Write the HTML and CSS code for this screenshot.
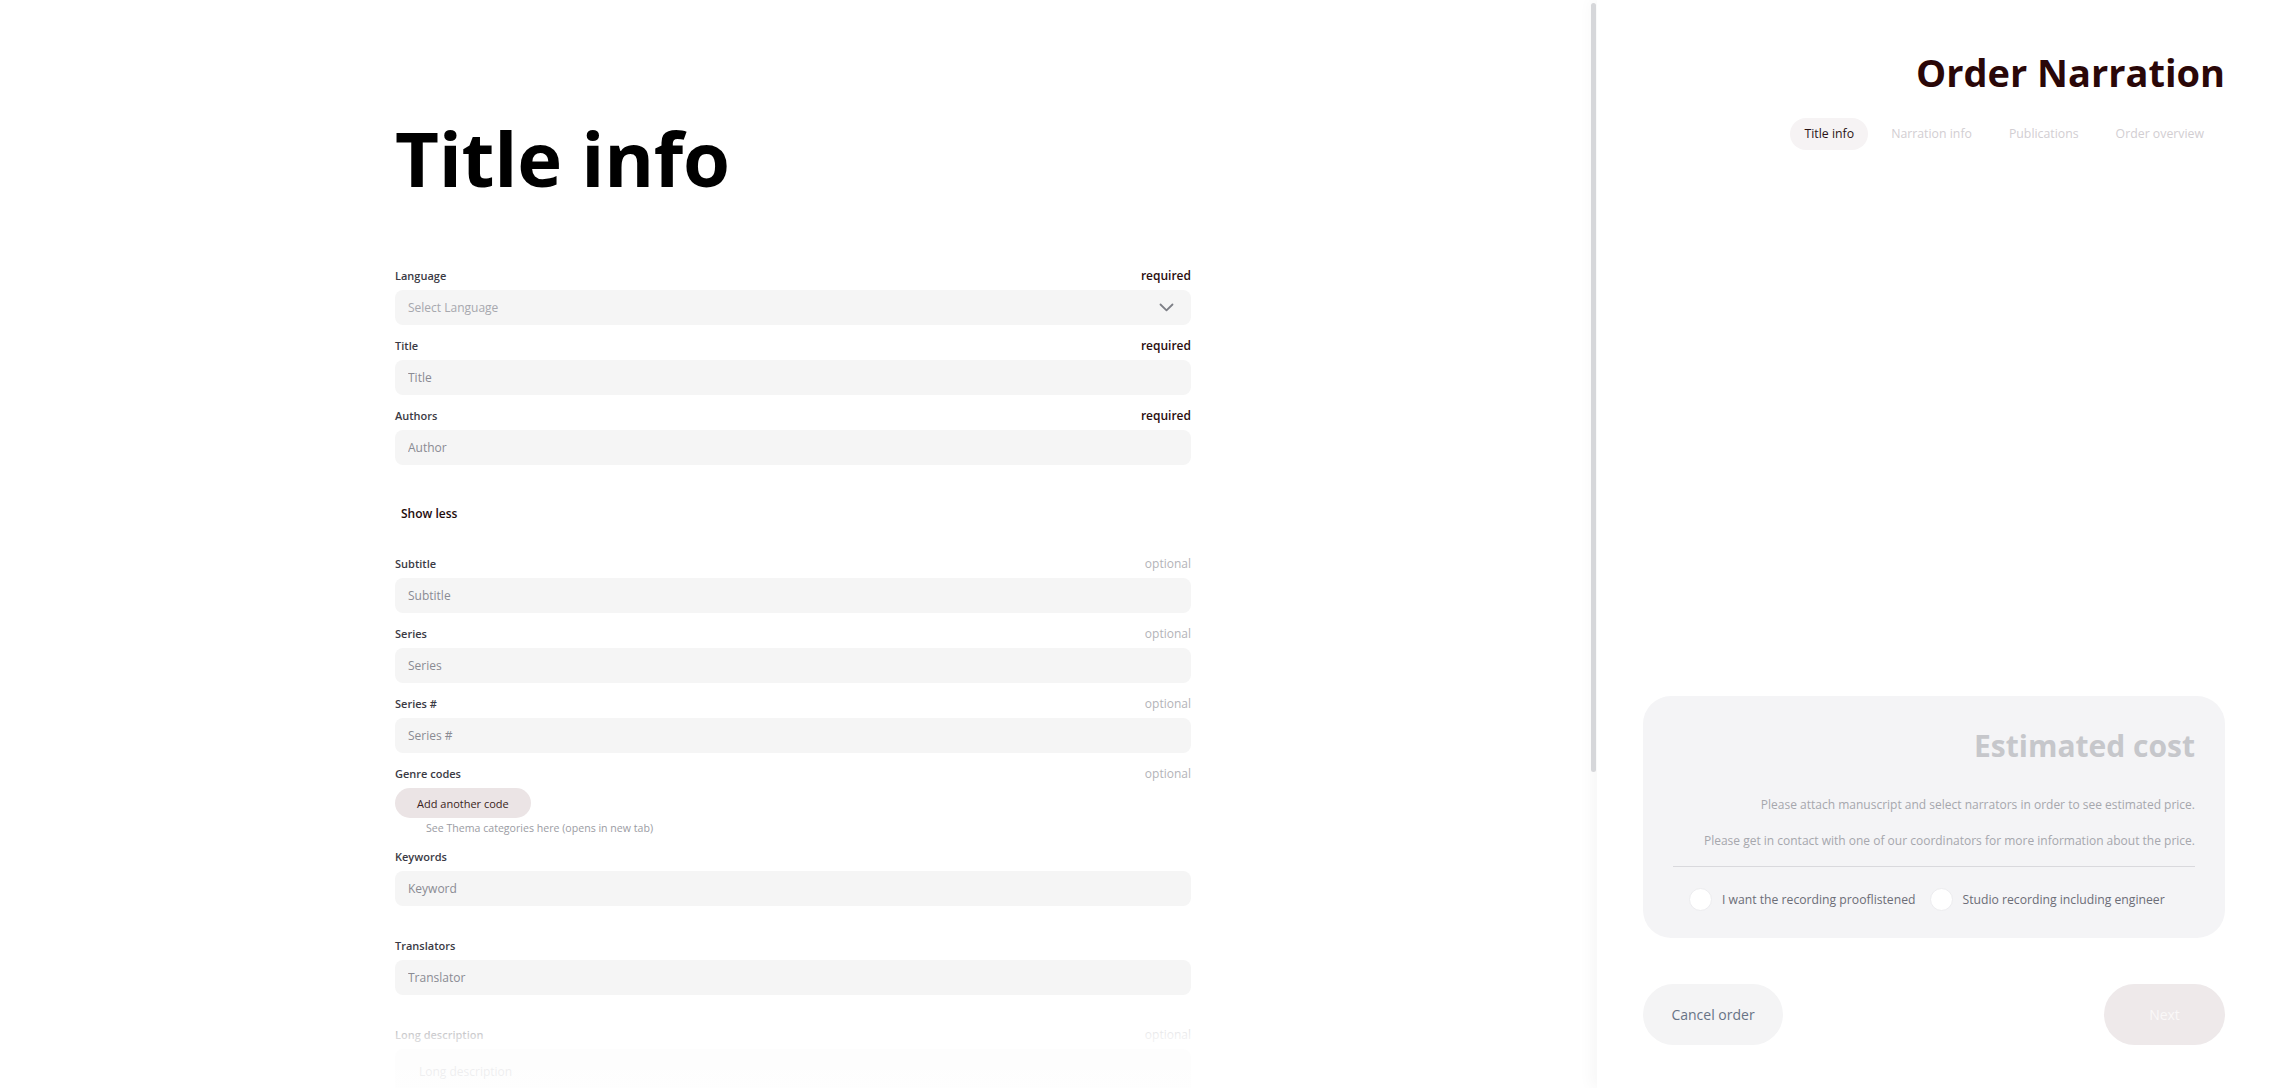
FILE: index.html
```html
<!DOCTYPE html>
<html lang="en">
<head>
<meta charset="utf-8">
<title>Order Narration</title>
<link rel="stylesheet" href="styles.css">
</head>
<body>
<div class="app">
  <main class="left">
    <div class="form-wrap">
      <h1 class="page-title">Title info</h1>

      <div class="field">
        <div class="field-head"><span class="label">Language</span><span class="req">required</span></div>
        <div class="select">
          <span class="select-ph">Select Language</span>
          <svg class="chev" width="15" height="9" viewBox="0 0 15 9"><path d="M1.5 1.5 L7.5 7.3 L13.5 1.5" fill="none" stroke="#7d7f86" stroke-width="1.8" stroke-linecap="round" stroke-linejoin="round"/></svg>
        </div>
      </div>

      <div class="field">
        <div class="field-head"><span class="label">Title</span><span class="req">required</span></div>
        <input class="input" placeholder="Title">
      </div>

      <div class="field">
        <div class="field-head"><span class="label">Authors</span><span class="req">required</span></div>
        <input class="input" placeholder="Author">
      </div>

      <button class="show-less">Show less</button>

      <div class="field">
        <div class="field-head"><span class="label">Subtitle</span><span class="opt">optional</span></div>
        <input class="input" placeholder="Subtitle">
      </div>

      <div class="field">
        <div class="field-head"><span class="label">Series</span><span class="opt">optional</span></div>
        <input class="input" placeholder="Series">
      </div>

      <div class="field">
        <div class="field-head"><span class="label">Series #</span><span class="opt">optional</span></div>
        <input class="input" placeholder="Series #">
      </div>

      <div class="field">
        <div class="field-head"><span class="label">Genre codes</span><span class="opt">optional</span></div>
        <button class="chip">Add another code</button>
        <div class="hint">See Thema categories here (opens in new tab)</div>
      </div>

      <div class="field">
        <div class="field-head"><span class="label">Keywords</span></div>
        <input class="input" placeholder="Keyword">
      </div>

      <div class="field field-spaced">
        <div class="field-head"><span class="label">Translators</span></div>
        <input class="input" placeholder="Translator">
      </div>

      <div class="field field-spaced">
        <div class="field-head"><span class="label">Long description</span><span class="opt">optional</span></div>
        <textarea class="input textarea" placeholder="Long description"></textarea>
      </div>

      <div class="field">
        <div class="field-head"><span class="label">Short description</span><span class="opt">optional</span></div>
        <textarea class="input textarea" placeholder="Short description"></textarea>
      </div>
    </div>
  </main>
  <div class="scroll-thumb"></div>
  <div class="fade"></div>

  <aside class="right">
    <header class="right-head">
      <h2 class="order-title">Order Narration</h2>
      <nav class="steps">
        <span class="step active">Title info</span>
        <span class="step">Narration info</span>
        <span class="step">Publications</span>
        <span class="step">Order overview</span>
      </nav>
    </header>

    <section class="cost">
      <h3 class="cost-title">Estimated cost</h3>
      <p class="cost-text">Please attach manuscript and select narrators in order to see estimated price.</p>
      <p class="cost-text">Please get in contact with one of our coordinators for more information about the price.</p>
      <div class="divider"></div>
      <div class="checks">
        <label class="check"><span class="circle"></span>I want the recording prooflistened</label>
        <label class="check"><span class="circle"></span>Studio recording including engineer</label>
      </div>
    </section>

    <div class="actions">
      <button class="btn btn-cancel">Cancel order</button>
      <button class="btn btn-next">Next</button>
    </div>
  </aside>
</div>
</body>
</html>
```
FILE: styles.css
```css
* { box-sizing: border-box; }
html, body {
  margin: 0;
  padding: 0;
  height: 100%;
  overflow: hidden;
  background: #ffffff;
  font-family: "Open Sans", "Noto Sans", sans-serif;
  color: #222;
}
.app {
  position: relative;
  display: flex;
  height: 100vh;
}
.left {
  flex: 0 0 1597px;
  height: 100vh;
  overflow: hidden;
  padding-right: 11px;
  background: #fff;
}
.scroll-thumb {
  position: absolute;
  left: 1591px;
  top: 3px;
  width: 5px;
  height: 769px;
  border-radius: 3px;
  background: #d6d7da;
  z-index: 2;
}
.form-wrap {
  width: 796px;
  margin: 0 auto;
  padding: 112px 0 220px;
}
.page-title {
  margin: 0 0 64px;
  font-size: 76px;
  line-height: 1.2;
  font-weight: 700;
  color: #000;
  letter-spacing: -0.3px;
}
.field {
  display: flex;
  flex-direction: column;
  margin-bottom: 12px;
}
.field-spaced { margin-top: 31px; }
.field-head {
  display: flex;
  justify-content: space-between;
  align-items: center;
  height: 16px;
  margin-bottom: 7px;
}
.label {
  font-size: 11px;
  font-weight: 600;
  color: #3a3a44;
}
.req {
  font-size: 12px;
  font-weight: 600;
  color: #2b0d0e;
}
.opt {
  font-size: 12px;
  font-weight: 400;
  color: #b3b3b8;
}
.input, .select {
  width: 100%;
  height: 35px;
  border: none;
  outline: none;
  border-radius: 8px;
  background: #f5f5f5;
  padding: 0 13px;
  font-family: inherit;
  font-size: 12px;
  color: #333;
}
.input::placeholder { color: #8a8b93; }
.textarea {
  height: 120px;
  padding: 14px 24px 0;
  resize: none;
}
.select {
  display: flex;
  align-items: center;
  justify-content: space-between;
  padding-right: 17px;
}
.select-ph { color: #a7a8ae; }
.chev { display: block; }
.show-less {
  display: block;
  align-self: flex-start;
  margin: 40px 0 32px;
  padding: 0 6px;
  height: 18px;
  border: none;
  background: none;
  font-family: inherit;
  font-size: 12px;
  font-weight: 600;
  color: #1e0b0c;
  line-height: 18px;
}
.chip {
  align-self: flex-start;
  height: 30px;
  padding: 0 22px;
  border: none;
  border-radius: 15px;
  background: #ebe4e5;
  font-family: inherit;
  font-size: 11px;
  font-weight: 500;
  color: #3a1e20;
}
.hint {
  margin-top: 2px;
  padding-left: 31px;
  font-size: 10.6px;
  line-height: 16px;
  color: #9b9ca3;
}
.fade {
  position: absolute;
  left: 0;
  bottom: 0;
  width: 1591px;
  height: 92px;
  pointer-events: none;
  background: linear-gradient(to bottom, rgba(255,255,255,0) 0%, rgba(255,255,255,0.8) 45%, rgba(255,255,255,0.88) 100%);
}

/* right panel */
.right {
  position: relative;
  flex: 1 1 auto;
  display: flex;
  flex-direction: column;
  padding: 46px 45px 43px 46px;
  background: #fff;
  box-shadow: -6px 0 14px rgba(0,0,0,0.035);
}
.right-head {
  display: flex;
  flex-direction: column;
  align-items: flex-end;
}
.order-title {
  margin: 0;
  font-size: 38px;
  line-height: 52px;
  font-weight: 700;
  color: #2a0708;
}
.steps {
  display: flex;
  gap: 9px;
  margin-top: 20px;
  margin-right: 7px;
}
.step {
  height: 32px;
  line-height: 32px;
  padding: 0 14px;
  border-radius: 16px;
  font-size: 12.3px;
  color: #d2ced2;
}
.step.active {
  background: #f6f3f4;
  color: #2b1416;
}
.cost {
  margin-top: auto;
  background: #f4f4f6;
  border-radius: 28px;
  padding: 28px 30px 27px;
  text-align: right;
}
.cost-title {
  margin: 0 0 28px;
  font-size: 30px;
  line-height: 44px;
  font-weight: 700;
  color: #c6c7cb;
}
.cost-text {
  margin: 0 0 18px;
  font-size: 12px;
  line-height: 18px;
  color: #a6a7ad;
}
.cost-text + .cost-text { margin-bottom: 16px; }
.divider {
  height: 1px;
  background: #d9d9dd;
}
.checks {
  display: flex;
  gap: 14px;
  margin-top: 21px;
  padding-left: 16px;
}
.check {
  display: flex;
  align-items: center;
  gap: 10px;
  font-size: 12.2px;
  color: #6c6d77;
}
.circle {
  width: 23px;
  height: 23px;
  border-radius: 50%;
  background: #fff;
  border: 1px solid #ececef;
}
.actions {
  display: flex;
  justify-content: space-between;
  margin-top: 46px;
}
.btn {
  height: 61px;
  border: none;
  border-radius: 31px;
  font-family: inherit;
  font-size: 14px;
}
.btn-cancel {
  width: 140px;
  background: #f4f4f5;
  color: #687386;
}
.btn-next {
  width: 121px;
  background: #eee9ea;
  color: #faf8f8;
}
```
